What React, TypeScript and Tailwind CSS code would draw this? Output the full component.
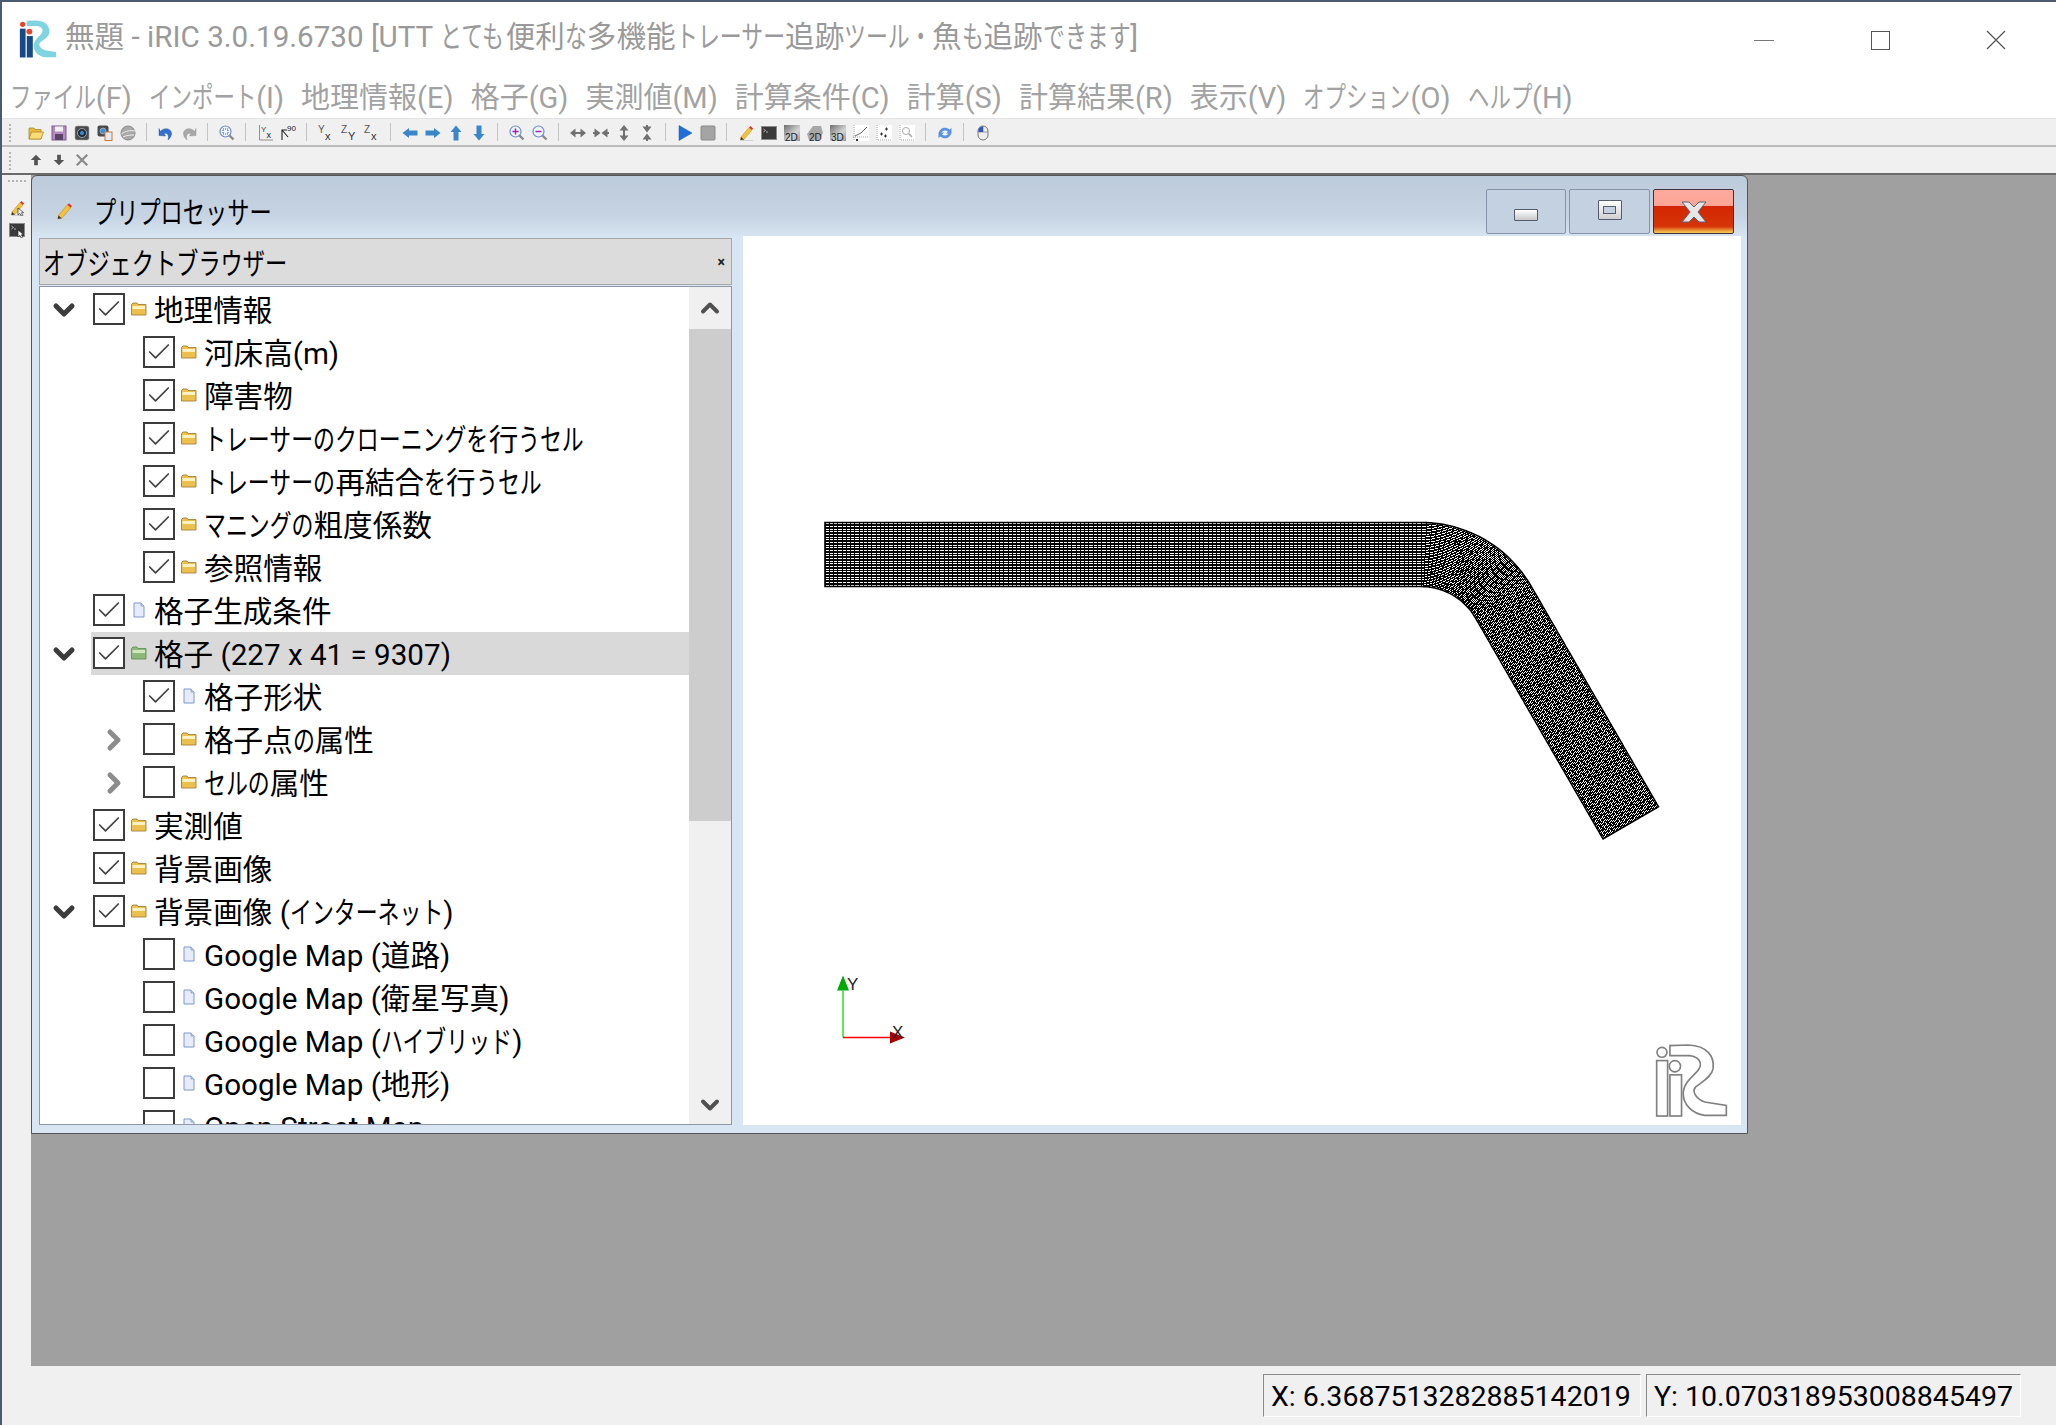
import { type ReactNode } from "react";
import { Check, ChevronDown, ChevronRight, ChevronUp } from "lucide-react";

// mesh: 227 x 41 nodes, straight / 60deg bend / straight
const CX = 678;
const CY = 413;
const N1 = 140;
const NA = 24;
const N2 = 62;
const BEND = Math.PI / 3;

function meshPoint(i: number, j: number): string {
  const r = 127 - (64 * j) / 40;
  let x: number;
  let y: number;
  if (i <= N1) {
    x = 82 + (i / N1) * 596;
    y = CY - r;
  } else if (i <= N1 + NA) {
    const a = ((i - N1) / NA) * BEND;
    x = CX + r * Math.sin(a);
    y = CY - r * Math.cos(a);
  } else {
    const d = ((i - N1 - NA) / N2) * 255;
    x = CX + r * Math.sin(BEND) + d * Math.cos(BEND);
    y = CY - r * Math.cos(BEND) + d * Math.sin(BEND);
  }
  return `${x.toFixed(1)} ${y.toFixed(1)}`;
}

function buildMesh(): string {
  const parts: string[] = [];
  for (let j = 0; j <= 40; j++) {
    const row: string[] = [];
    for (let i = 0; i <= 226; i++) row.push(meshPoint(i, j));
    parts.push("M" + row.join("L"));
  }
  for (let i = 0; i <= 226; i++) {
    const col: string[] = [];
    for (let j = 0; j <= 40; j++) col.push(meshPoint(i, j));
    parts.push("M" + col.join("L"));
  }
  return parts.join("");
}

const MESH = buildMesh();

function buildOutline(): string {
  const pts: string[] = [];
  for (let i = 0; i <= 226; i++) pts.push(meshPoint(i, 0));
  for (let i = 226; i >= 0; i--) pts.push(meshPoint(i, 40));
  return "M" + pts.join("L") + "Z";
}

const OUTLINE = buildOutline();

// kana in the reference font is condensed to about 0.74em a glyph
const KANA_PITCH = 0.74;

function Jp({ text }: { text: string }) {
  const runs = text.match(/[\u3040-\u30ff]+|[^\u3040-\u30ff]+/g) ?? [];
  return (
    <>
      {runs.map((run, i) =>
        /[\u3040-\u30ff]/.test(run) ? (
          <span
            key={i}
            className="inline-block origin-left scale-x-[0.74] whitespace-nowrap"
            style={{ width: `${run.length * KANA_PITCH}em` }}
          >
            {run}
          </span>
        ) : (
          <span key={i}>{run}</span>
        ),
      )}
    </>
  );
}

const R_PATH =
  "M145 110V80L200 78C260 80 280 115 275 150C270 175 240 190 222 205C210 220 225 240 250 250L315 260V290H250C210 285 185 255 185 225C185 195 210 175 225 160C245 140 240 115 205 110Z";

function IricLogo({ color }: { color?: boolean }) {
  if (color) {
    return (
      <svg viewBox="100 75 220 220" className="h-[38px] w-[38px]">
        <rect x="105" y="125" width="33" height="167" fill="#164a86" />
        <rect x="145" y="168" width="35" height="124" fill="#164a86" />
        <circle cx="121" cy="100" r="15" fill="#e8452c" />
        <circle cx="160" cy="142" r="17" fill="#e8452c" />
        <path d={R_PATH} fill="#80d4e2" />
      </svg>
    );
  }
  return (
    <svg viewBox="100 75 220 220" className="h-[73px] w-[73px]" fill="#fff" stroke="#808080" strokeWidth="5">
      <rect x="105" y="125" width="33" height="167" />
      <rect x="145" y="168" width="35" height="124" />
      <circle cx="121" cy="100" r="15" />
      <circle cx="160" cy="142" r="17" />
      <path d={R_PATH} />
    </svg>
  );
}

function Glyph({ children, className = "h-4 w-4" }: { children: ReactNode; className?: string }) {
  return (
    <svg viewBox="0 0 16 16" className={className}>
      {children}
    </svg>
  );
}

function Folder({ green }: { green?: boolean }) {
  return (
    <Glyph className="h-4 w-4 shrink-0">
      <path
        d="M0.5 3.5L2 2H6L7 3.5H15V14H0.5Z"
        fill={green ? "#8db87a" : "#ecc04e"}
        stroke={green ? "#64905a" : "#a5803a"}
        strokeWidth="0.9"
      />
      <rect x="1.5" y="5" width="12.5" height="3" fill={green ? "#cfe6c0" : "#fdf2c0"} />
    </Glyph>
  );
}

function Doc() {
  return (
    <Glyph className="h-4 w-4 shrink-0">
      <path d="M3 1H10L13 4V15H3Z" fill="#e6ecfa" stroke="#7f97cf" strokeWidth="1" />
      <path d="M10 1V4H13" fill="#c8d4f0" stroke="#7f97cf" strokeWidth="0.8" />
    </Glyph>
  );
}

function Pencil() {
  return (
    <>
      <path d="M3 12L11 2.5L14 5L6 14.5L2.5 15Z" fill="#f2c23e" stroke="#b98a1e" strokeWidth="0.5" />
      <path d="M11 2.5L12.5 1L15 3.5L14 5Z" fill="#d8352a" />
      <path d="M2.5 15L3 12L6 14.5Z" fill="#333" />
      <rect x="2" y="15" width="13" height="1" fill="#d0d0d0" />
    </>
  );
}

function Terminal() {
  return (
    <>
      <rect x="0.5" y="1.5" width="15" height="13" fill="#3a3a3a" stroke="#8a8a8a" />
      <path d="M2.5 4L4.5 5.5L2.5 7M5 7H7" stroke="#fff" strokeWidth="0.6" fill="none" />
    </>
  );
}

function Cursor() {
  return <path d="M9 8V15L10.8 13.4L12.2 16L13.6 15.2L12.4 12.8L14.6 12.6Z" fill="#fff" stroke="#222" strokeWidth="0.7" />;
}

function Mag({ sign }: { sign?: string }) {
  return (
    <>
      <path d="M9.5 9.5L14.5 14.5" stroke="#8a8a8a" strokeWidth="2.4" />
      <circle cx="6.5" cy="6.5" r="5.5" fill="#eef4fc" stroke="#6f8fc4" strokeWidth="1.2" />
      {sign === "+" && <path d="M3.5 6.5H9.5M6.5 3.5V9.5" stroke="#a020b0" strokeWidth="1.4" />}
      {sign === "-" && <path d="M3.5 6.5H9.5" stroke="#a020b0" strokeWidth="1.4" />}
      {sign === "fit" && <rect x="4" y="4" width="5" height="5" fill="none" stroke="#2a56b0" strokeDasharray="1 1" />}
    </>
  );
}

function AxisPair({ a, b }: { a: string; b: string }) {
  return (
    <>
      <text x="0" y="8" fontSize="10" fontFamily="Liberation Sans" fill="#555">{a}</text>
      <text x="7" y="15" fontSize="11" fontFamily="Liberation Sans" fill="#333">{b}</text>
    </>
  );
}

function Dim({ label }: { label: string }) {
  return (
    <>
      <defs>
        <linearGradient id="dimFill" x1="0" y1="0" x2="1" y2="1">
          <stop offset="0" stopColor="#6e6e6e" />
          <stop offset="0.6" stopColor="#d4d4d4" />
          <stop offset="1" stopColor="#999" />
        </linearGradient>
      </defs>
      <rect x="0" y="0" width="16" height="16" fill="url(#dimFill)" />
      <text x="1" y="15.5" fontSize="10" fontFamily="Liberation Sans" fill="#222">{label}</text>
    </>
  );
}

const TOOLBAR: (string | null)[] = [
  "folder", "save", "cam", "cam2", "globe", null,
  "undo", "redo", null,
  "fit", null,
  "xy", "rot", null,
  "yx", "zy", "zx", null,
  "left", "right", "up", "down", null,
  "zin", "zout", null,
  "h1", "h2", "v1", "v2", null,
  "play", "stop", null,
  "pencil", "term", "d2", "d2b", "d3", "chart", "pts", "find", null,
  "sync", null,
  "mouse",
];

function ToolIcon({ name }: { name: string }) {
  switch (name) {
    case "folder":
      return <Glyph><path d="M1 3H6L7 4.5H13V14H1Z" fill="#e8b93a" stroke="#a97f20" strokeWidth="0.7" /><path d="M1 14L3.5 7H15.5L13 14Z" fill="#fbdc74" stroke="#a97f20" strokeWidth="0.7" /></Glyph>;
    case "save":
      return <Glyph><rect x="1" y="1" width="14" height="14" fill="#b48ac2" stroke="#7b5a8c" /><rect x="4" y="1.5" width="8" height="5" fill="#f0f0f0" /><rect x="4" y="9" width="8" height="6" fill="#5a4466" /></Glyph>;
    case "cam":
      return <Glyph><rect x="1" y="1" width="14" height="14" rx="2" fill="#4a4a4a" stroke="#aaa" strokeWidth="0.6" /><circle cx="8" cy="8" r="4.5" fill="#1d2c3c" stroke="#ddd" strokeWidth="0.6" /><circle cx="8" cy="8" r="2" fill="#3f8fd8" /></Glyph>;
    case "cam2":
      return <Glyph><rect x="0.5" y="0.5" width="11" height="11" rx="2" fill="#4a4a4a" /><circle cx="6" cy="6" r="3" fill="#3f8fd8" stroke="#ddd" strokeWidth="0.5" /><rect x="8" y="7" width="7" height="8.5" fill="#e8e8f0" stroke="#c47a3c" /></Glyph>;
    case "globe":
      return <Glyph><circle cx="8" cy="8" r="7" fill="#a8a8a8" stroke="#8a8a8a" /><path d="M1.5 9C5 6 11 5 15 6M3 12C7 10 11 10 14 10" stroke="#eee" fill="none" /></Glyph>;
    case "undo":
      return <Glyph><path d="M2.5 6.5C5.5 2 13 3 13.5 8C13.8 11 12 13 10 15C11 11.5 10.5 7.5 6 8.5L7.5 11L1 10.5L1 3.5Z" fill="#2f6fd0" stroke="#1e4f9e" strokeWidth="0.4" /></Glyph>;
    case "redo":
      return <Glyph><path d="M13.5 6.5C10.5 2 3 3 2.5 8C2.2 11 4 13 6 15C5 11.5 5.5 7.5 10 8.5L8.5 11L15 10.5L15 3.5Z" fill="#a8a8a8" stroke="#8a8a8a" strokeWidth="0.4" /></Glyph>;
    case "fit":
      return <Glyph><Mag sign="fit" /></Glyph>;
    case "xy":
      return <Glyph><path d="M2.5 0V15H16" stroke="#777" strokeWidth="0.8" fill="none" /><text x="4" y="7" fontSize="8" fontFamily="Liberation Sans" fill="#444">Y</text><text x="9.5" y="13" fontSize="9" fontFamily="Liberation Sans" fill="#222">x</text></Glyph>;
    case "rot":
      return <Glyph><path d="M2 15V5H7M2 5L8 12" stroke="#222" strokeWidth="1.1" fill="none" /><text x="7" y="6" fontSize="8" fontFamily="Liberation Sans" fill="#222">90</text></Glyph>;
    case "yx":
      return <Glyph><AxisPair a="Y" b="x" /></Glyph>;
    case "zy":
      return <Glyph><AxisPair a="Z" b="Y" /></Glyph>;
    case "zx":
      return <Glyph><AxisPair a="Z" b="x" /></Glyph>;
    case "left":
      return <Glyph><path d="M0.5 8L7 3V5.5H15.5V10.5H7V13Z" fill="#3a86c8" /></Glyph>;
    case "right":
      return <Glyph><path d="M15.5 8L9 3V5.5H0.5V10.5H9V13Z" fill="#3a86c8" /></Glyph>;
    case "up":
      return <Glyph><path d="M8 0.5L13.5 7H10.5V15.5H5.5V7H2.5Z" fill="#3a86c8" /></Glyph>;
    case "down":
      return <Glyph><path d="M8 15.5L13.5 9H10.5V0.5H5.5V9H2.5Z" fill="#3a86c8" /></Glyph>;
    case "zin":
      return <Glyph><Mag sign="+" /></Glyph>;
    case "zout":
      return <Glyph><Mag sign="-" /></Glyph>;
    case "h1":
      return <Glyph><path d="M0 8L5.5 3.5V12.5ZM16 8L10.5 3.5V12.5ZM5.5 7H10.5V9H5.5Z" fill="#707070" /></Glyph>;
    case "h2":
      return <Glyph><path d="M7.5 8L1.5 3.5V12.5ZM8.5 8L14.5 3.5V12.5Z" fill="#707070" /><path d="M0 7H2V9H0ZM14 7H16V9H14Z" fill="#707070" /></Glyph>;
    case "v1":
      return <Glyph><path d="M8 0L3.5 5.5H12.5ZM8 16L3.5 10.5H12.5ZM7 5.5H9V10.5H7Z" fill="#707070" /></Glyph>;
    case "v2":
      return <Glyph><path d="M8 7.5L3.5 1.5H12.5ZM8 8.5L3.5 14.5H12.5Z" fill="#707070" /><path d="M7 0H9V2H7ZM7 14H9V16H7Z" fill="#707070" /></Glyph>;
    case "play":
      return <Glyph><path d="M2 0.5L15 8L2 15.5Z" fill="#1e6fd8" stroke="#155aa8" strokeWidth="0.5" /></Glyph>;
    case "stop":
      return <Glyph><rect x="1" y="1" width="14" height="14" rx="1" fill="#a4a4a4" stroke="#8a8a8a" /></Glyph>;
    case "pencil":
      return <Glyph><Pencil /></Glyph>;
    case "term":
      return <Glyph><Terminal /></Glyph>;
    case "d2":
      return <Glyph><Dim label="2D" /></Glyph>;
    case "d2b":
      return <Glyph><path d="M0 9L6 1H14L16 8L12 15H2Z" fill="#a8a8a8" /><text x="2" y="15.5" fontSize="10" fontFamily="Liberation Sans" fill="#222">2D</text></Glyph>;
    case "d3":
      return <Glyph><Dim label="3D" /></Glyph>;
    case "chart":
      return <Glyph><rect width="16" height="16" fill="#fff" /><path d="M1 0V15M0 12H16" stroke="#888" strokeWidth="0.8" strokeDasharray="1 1" /><path d="M2 11L8 8L14 2" stroke="#666" fill="none" /><rect x="3" y="14" width="2" height="2" fill="#333" /></Glyph>;
    case "pts":
      return <Glyph><rect width="16" height="16" fill="#fff" /><path d="M1 0V15H16" stroke="#888" strokeWidth="0.8" strokeDasharray="1 1" fill="none" /><path d="M4 9H7M5.5 7.5V10.5M9 4H12M10.5 2.5V5.5M8 11H11M9.5 9.5V12.5" stroke="#222" strokeWidth="0.9" /></Glyph>;
    case "find":
      return <Glyph><rect width="16" height="16" fill="#fff" /><path d="M1 0V15H16" stroke="#888" strokeWidth="0.8" strokeDasharray="1 1" fill="none" /><circle cx="7" cy="6" r="3.5" fill="none" stroke="#aaa" /><path d="M9.5 8.5L13 12" stroke="#aaa" strokeWidth="1.6" /></Glyph>;
    case "sync":
      return <Glyph><path d="M2 8C2 3 9 1 12.5 4.5L14.5 3V8.5H9L11 6.5C8.5 4.5 5 5.5 4.5 8Z" fill="#5a94e0" /><path d="M14 8C14 13 7 15 3.5 11.5L1.5 13V7.5H7L5 9.5C7.5 11.5 11 10.5 11.5 8Z" fill="#5a94e0" /></Glyph>;
    case "mouse":
      return <Glyph><rect x="3" y="1" width="10" height="14" rx="5" fill="#eee" stroke="#777" /><path d="M8 1V7M3 7H13" stroke="#777" strokeWidth="0.7" /><path d="M3.5 7V5.5C3.5 3 5.5 1.5 8 1.5V7Z" fill="#2f55c8" /></Glyph>;
    default:
      return null;
  }
}

function Grip() {
  return <div className="absolute left-[7px] top-[5px] h-[18px] w-[2px] border-l-2 border-dotted border-[#b5b5b5]" />;
}

const MENUS = ["ファイル(F)", "インポート(I)", "地理情報(E)", "格子(G)", "実測値(M)", "計算条件(C)", "計算(S)", "計算結果(R)", "表示(V)", "オプション(O)", "ヘルプ(H)"];

type Row = {
  label: string;
  level: 0 | 1;
  checked?: boolean;
  icon?: "folder" | "green" | "doc";
  open?: "down" | "right";
  selected?: boolean;
};

const ROWS: Row[] = [
  { label: "地理情報", level: 0, checked: true, open: "down" },
  { label: "河床高(m)", level: 1, checked: true },
  { label: "障害物", level: 1, checked: true },
  { label: "トレーサーのクローニングを行うセル", level: 1, checked: true },
  { label: "トレーサーの再結合を行うセル", level: 1, checked: true },
  { label: "マニングの粗度係数", level: 1, checked: true },
  { label: "参照情報", level: 1, checked: true },
  { label: "格子生成条件", level: 0, checked: true, icon: "doc" },
  { label: "格子 (227 x 41 = 9307)", level: 0, checked: true, icon: "green", open: "down", selected: true },
  { label: "格子形状", level: 1, checked: true, icon: "doc" },
  { label: "格子点の属性", level: 1, open: "right" },
  { label: "セルの属性", level: 1, open: "right" },
  { label: "実測値", level: 0, checked: true },
  { label: "背景画像", level: 0, checked: true },
  { label: "背景画像 (インターネット)", level: 0, checked: true, open: "down" },
  { label: "Google Map (道路)", level: 1, icon: "doc" },
  { label: "Google Map (衛星写真)", level: 1, icon: "doc" },
  { label: "Google Map (ハイブリッド)", level: 1, icon: "doc" },
  { label: "Google Map (地形)", level: 1, icon: "doc" },
  { label: "Open Street Map", level: 1, icon: "doc" },
];

function TreeRow({ row }: { row: Row }) {
  return (
    <div className="relative flex h-[43px] shrink-0 items-center">
      {row.selected && <div className="absolute bottom-0 left-[51px] right-0 top-0 bg-[#d9d9d9]" />}
      <div className={`relative flex shrink-0 items-center ${row.level === 0 ? "w-[53px] pl-[10px]" : "w-[103px] pl-[60px]"}`}>
        {row.open === "down" && <ChevronDown size={32} strokeWidth={3.8} className="-ml-[2px] text-[#3c3c3c]" />}
        {row.open === "right" && <ChevronRight size={32} strokeWidth={3.8} className="-ml-[2px] text-[#8c8c8c]" />}
      </div>
      <div className="relative flex h-[32px] w-[32px] shrink-0 -translate-y-[1px] items-center justify-center border-2 border-[#3c3c3c] bg-white">
        {row.checked && <Check size={30} strokeWidth={1.5} className="text-[#444]" />}
      </div>
      <div className="relative ml-[6px] mr-[7px] flex shrink-0 -translate-y-[1px] items-center">
        {row.icon === "doc" ? <Doc /> : <Folder green={row.icon === "green"} />}
      </div>
      <span className="relative whitespace-nowrap pt-[4px] text-[29.6px] leading-none text-black">
        <Jp text={row.label} />
      </span>
    </div>
  );
}

export default function App() {
  return (
    <div className="flex h-[1425px] w-[2056px] flex-col overflow-hidden border-l-2 border-t-2 border-[#4a5a70] bg-white font-['Roboto','Noto_Sans_CJK_JP',sans-serif]">
      {/* title bar */}
      <div className="flex h-[76px] shrink-0 items-center bg-white">
        <div className="ml-[17px] mt-[-3px] flex w-[46px] justify-start">
          <IricLogo color />
        </div>
        <span className="flex-1 -translate-y-[3px] whitespace-nowrap text-[29.6px] text-[#9a9a9a]">
          <Jp text="無題 - iRIC 3.0.19.6730 [UTT とても便利な多機能トレーサー追跡ツール・魚も追跡できます]" />
        </span>
        <div className="flex items-center pr-[2px]">
          <div className="flex w-[116px] justify-center"><div className="h-[1px] w-[20px] bg-[#777]" /></div>
          <div className="flex w-[116px] justify-center"><div className="h-[19px] w-[19px] border border-[#555]" /></div>
          <div className="flex w-[116px] justify-center">
            <svg viewBox="0 0 20 20" className="h-[20px] w-[20px]"><path d="M1 1L19 19M19 1L1 19" stroke="#555" strokeWidth="1.2" /></svg>
          </div>
        </div>
      </div>
      {/* menu */}
      <div className="flex h-[40px] shrink-0 items-center gap-[17px] bg-white pl-[8px]">
        {MENUS.map((m) => (
          <span key={m} className="whitespace-nowrap text-[29px] leading-none text-[#a2a2a2]"><Jp text={m} /></span>
        ))}
      </div>
      {/* toolbars */}
      <div className="relative flex h-[29px] shrink-0 items-center border-b-2 border-t border-b-[#bcbcbc] border-t-[#e4e4e4] bg-[#f0f0f0] pl-[22px]">
        <Grip />
        {TOOLBAR.map((name, i) =>
          name ? (
            <div key={i} className="flex h-4 w-[23px] shrink-0 translate-y-[1px] justify-center">
              <ToolIcon name={name} />
            </div>
          ) : (
            <div key={i} className="flex w-[15px] shrink-0 justify-center">
              <div className="h-[18px] w-[1px] bg-[#c4c4c4]" />
            </div>
          ),
        )}
      </div>
      <div className="relative flex h-[28px] shrink-0 items-center border-b-2 border-b-[#6a6a6a] bg-[#f0f0f0] pl-[22px]">
        <Grip />
        <div className="flex w-[23px] justify-center">
          <Glyph className="h-3 w-3"><path d="M8 1L15 8H10.5V15H5.5V8H1Z" fill="#555" /></Glyph>
        </div>
        <div className="flex w-[23px] justify-center">
          <Glyph className="h-3 w-3"><path d="M8 15L15 8H10.5V1H5.5V8H1Z" fill="#555" /></Glyph>
        </div>
        <div className="flex w-[23px] justify-center">
          <Glyph className="h-[14px] w-[14px]"><path d="M2 2L14 14M14 2L2 14" stroke="#8a8a8a" strokeWidth="2.6" /></Glyph>
        </div>
      </div>
      {/* middle */}
      <div className="flex min-h-0 flex-1">
        <div className="flex w-[29px] shrink-0 flex-col items-center bg-[#f0f0f0] pt-[5px]">
          <div className="h-[2px] w-[18px] border-t-2 border-dotted border-[#b5b5b5]" />
          <div className="mt-[18px] flex flex-col gap-[6px]">
            <Glyph><Pencil /><Cursor /></Glyph>
            <Glyph><Terminal /><Cursor /></Glyph>
          </div>
        </div>
        <div className="min-w-0 flex-1 bg-[#a0a0a0]">
          {/* preprocessor window */}
          <div className="flex h-[959px] w-[1717px] flex-col rounded-t-[6px] border border-[#555] bg-[linear-gradient(180deg,#bccbdb_0px,#c6d3e2_40px,#d8e5f3_62px)]">
            <div className="flex h-[61px] shrink-0 items-start">
              <div className="ml-[23px] mt-[26px]"><Glyph className="h-[18px] w-[18px]"><Pencil /></Glyph></div>
              <span className="ml-[21px] mt-[17px] flex-1 whitespace-nowrap text-[30px] leading-[40px] text-black">
                <Jp text="プリプロセッサー" />
              </span>
              <div className="mr-[13px] mt-[13px] flex gap-[3px]">
                <div className="flex h-[45px] w-[80px] items-center justify-center rounded-[2px] border border-[#8593ab] bg-[#c3d1e1] pt-[6px]">
                  <div className="h-[12px] w-[24px] rounded-[1px] border border-[#565c70] bg-[linear-gradient(180deg,#fff,#c8c8c8)]" />
                </div>
                <div className="flex h-[45px] w-[81px] items-center justify-center rounded-[2px] border border-[#8593ab] bg-[#c3d1e1] pb-[3px]">
                  <div className="flex h-[20px] w-[24px] items-center justify-center rounded-[1px] border border-[#565c70] bg-[linear-gradient(180deg,#fff,#d0d0d0)]">
                    <div className="h-[8px] w-[13px] border border-[#565c70] bg-[#c3d1e1]" />
                  </div>
                </div>
                <div className="flex h-[45px] w-[81px] items-center justify-center rounded-[2px] border border-[#3f3040] bg-[linear-gradient(180deg,#fcaa9c_0%,#fca596_36%,#d22600_37%,#d63409_85%,#f5c050_98%)]">
                  <svg viewBox="0 0 26 22" className="h-[22px] w-[26px]">
                    <path d="M1 1H8L13 6L18 1H25L17 11L25 21H18L13 16L8 21H1L9 11Z" fill="#e6e6e6" stroke="#5a6078" strokeWidth="1" />
                  </svg>
                </div>
              </div>
            </div>
            <div className="flex min-h-0 flex-1 pb-[8px] pl-[7px] pr-[6px]">
              {/* object browser */}
              <div className="flex w-[693px] shrink-0 flex-col pt-[1px]">
                <div className="flex h-[47px] shrink-0 items-center justify-between border border-[#a8a8a8] bg-[#dcdcdc] pl-[3px] pr-[6px]">
                  <span className="whitespace-nowrap pt-[4px] text-[30px] leading-none text-black">
                    <Jp text="オブジェクトブラウザー" />
                  </span>
                  <span className="text-[14px] font-bold leading-none text-[#222]">×</span>
                </div>
                <div className="mt-[1px] flex min-h-0 flex-1 border border-[#8f98a6] bg-white">
                  <div className="flex min-w-0 flex-1 flex-col overflow-hidden pt-[1px]">
                    {ROWS.map((r) => (
                      <TreeRow key={r.label} row={r} />
                    ))}
                  </div>
                  <div className="flex w-[42px] shrink-0 flex-col items-center bg-[#f0f0f0]">
                    <div className="flex h-[42px] items-center justify-center">
                      <ChevronUp size={28} strokeWidth={3.4} className="text-[#505050]" />
                    </div>
                    <div className="h-[492px] w-full bg-[#cdcdcd]" />
                    <div className="flex flex-1 items-end justify-center pb-[5px]">
                      <ChevronDown size={28} strokeWidth={3.4} className="text-[#505050]" />
                    </div>
                  </div>
                </div>
              </div>
              {/* graphics view */}
              <div className="relative ml-[11px] -mt-[1px] min-w-0 flex-1 bg-white">
                <svg viewBox="0 0 998 888" className="absolute inset-0 h-full w-full">
                  <path d={MESH} fill="none" stroke="#000" strokeWidth="1" shapeRendering="crispEdges" />
                  <path d={OUTLINE} fill="none" stroke="#000" strokeWidth="1.6" />
                  <path d="M100 754V801" stroke="#19e019" strokeWidth="1.4" />
                  <path d="M100 739L106 754H94Z" fill="#00a800" />
                  <path d="M100 801H147" stroke="#ff0000" strokeWidth="1.4" />
                  <path d="M162 801L147 795V807Z" fill="#a80000" />
                  <text x="104" y="753" fontSize="17" fontFamily="Liberation Sans" fill="#222">Y</text>
                  <text x="149" y="801" fontSize="17" fontFamily="Liberation Sans" fill="#222">X</text>
                </svg>
                <div className="absolute bottom-[8px] right-[13px]">
                  <IricLogo />
                </div>
              </div>
            </div>
          </div>
        </div>
      </div>
      {/* status bar */}
      <div className="flex h-[59px] shrink-0 items-center justify-end bg-[#f0f0f0] pr-[35px]">
        <div className="flex h-[43px] w-[378px] items-center border border-b-white border-l-[#8a8a8a] border-r-white border-t-[#8a8a8a] pl-[7px]">
          <span className="whitespace-nowrap pt-[3px] text-[28.5px] leading-none text-black">X: 6.3687513282885142019</span>
        </div>
        <div className="ml-[5px] flex h-[43px] w-[375px] items-center border border-b-white border-l-[#8a8a8a] border-r-white border-t-[#8a8a8a] pl-[7px]">
          <span className="whitespace-nowrap pt-[3px] text-[28.5px] leading-none text-black">Y: 10.070318953008845497</span>
        </div>
      </div>
    </div>
  );
}
